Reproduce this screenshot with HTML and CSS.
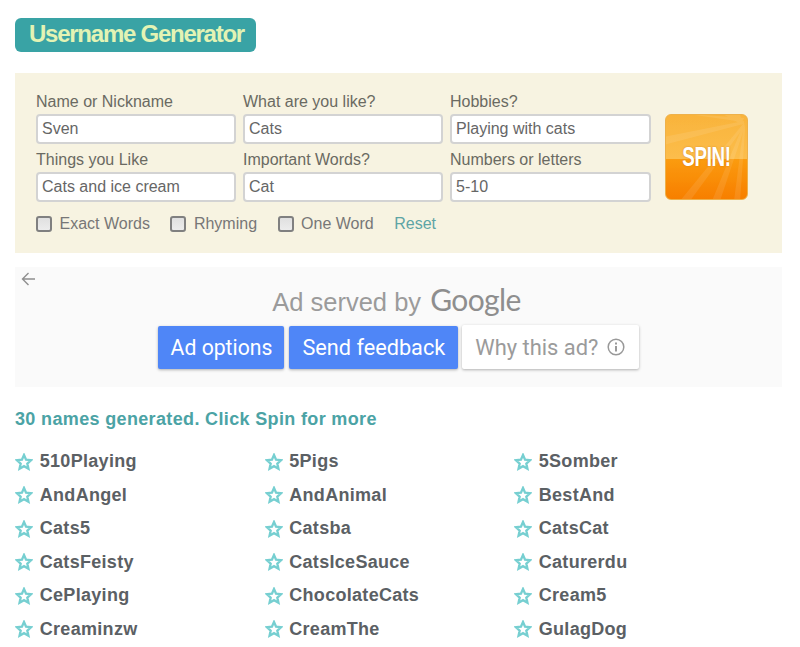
FILE: index.html
```html
<!DOCTYPE html>
<html lang="en">
<head>
<meta charset="utf-8">
<title>Username Generator</title>
<link rel="stylesheet" href="styles.css">
</head>
<body>
<h1 class="title">Username Generator</h1>
<form class="panel">
  <div class="fields">
    <div class="grid">
      <label class="field"><span>Name or Nickname</span><input value="Sven"></label>
      <label class="field"><span>What are you like?</span><input value="Cats"></label>
      <label class="field"><span>Hobbies?</span><input value="Playing with cats"></label>
      <label class="field"><span>Things you Like</span><input value="Cats and ice cream"></label>
      <label class="field"><span>Important Words?</span><input value="Cat"></label>
      <label class="field"><span>Numbers or letters</span><input value="5-10"></label>
    </div>
    <div class="options">
      <label class="check"><input type="checkbox"><span>Exact Words</span></label>
      <label class="check"><input type="checkbox"><span>Rhyming</span></label>
      <label class="check"><input type="checkbox"><span>One Word</span></label>
      <a class="reset">Reset</a>
    </div>
  </div>
  <button type="button" class="spin">
    <svg class="rays" viewBox="0 0 83 86" aria-hidden="true">
      <g fill="#fff" opacity=".09">
        <polygon points="76,0 60,0 78,10"/>
        <polygon points="80,3 38,0 30,0 78,7"/>
        <polygon points="80,6 0,22 0,30 80,9"/>
        <polygon points="80,8 48,86 56,86 80,14"/>
        <polygon points="80,8 70,86 76,86 81,14"/>
        <polygon points="80,8 16,86 26,86 80,12"/>
      </g>
    </svg>
    <span class="spin-text">SPIN!</span>
  </button>
</form>
<section class="ad">
  <svg class="back" viewBox="0 0 14 14" aria-hidden="true"><path d="M14 7H1.500M7.500 1L1.500 7l6 6" fill="none" stroke="#8f8f8f" stroke-width="1.4"/></svg>
  <div class="served">Ad served by <span class="google">Google</span></div>
  <div class="ad-buttons">
    <a class="ad-btn">Ad options</a>
    <a class="ad-btn">Send feedback</a>
    <a class="ad-btn why">Why this ad?
      <svg class="info" viewBox="0 0 18 18" aria-hidden="true"><circle cx="9" cy="9" r="7.800" fill="none" stroke="#999" stroke-width="1.500"/><rect x="8" y="8" width="2" height="5.500" fill="#999"/><rect x="8" y="4.500" width="2" height="2" fill="#999"/></svg>
    </a>
  </div>
</section>
<h2 class="count">30 names generated. Click Spin for more</h2>
<ul class="names">
  <li><svg class="star" viewBox="0 0 20 20"><path d="M10 2.2l2.3 5.2 5.6.6-4.2 3.8 1.2 5.6L10 14.6l-4.9 2.8 1.2-5.6L2.100 8l5.600-.6z"/></svg>510Playing</li>
  <li><svg class="star" viewBox="0 0 20 20"><path d="M10 2.2l2.3 5.2 5.6.6-4.2 3.8 1.2 5.6L10 14.6l-4.9 2.8 1.2-5.6L2.100 8l5.600-.6z"/></svg>5Pigs</li>
  <li><svg class="star" viewBox="0 0 20 20"><path d="M10 2.2l2.3 5.2 5.6.6-4.2 3.8 1.2 5.6L10 14.6l-4.9 2.8 1.2-5.6L2.100 8l5.600-.6z"/></svg>5Somber</li>
  <li><svg class="star" viewBox="0 0 20 20"><path d="M10 2.2l2.3 5.2 5.6.6-4.2 3.8 1.2 5.6L10 14.6l-4.9 2.8 1.2-5.6L2.100 8l5.600-.6z"/></svg>AndAngel</li>
  <li><svg class="star" viewBox="0 0 20 20"><path d="M10 2.2l2.3 5.2 5.6.6-4.2 3.8 1.2 5.6L10 14.6l-4.9 2.8 1.2-5.6L2.100 8l5.600-.6z"/></svg>AndAnimal</li>
  <li><svg class="star" viewBox="0 0 20 20"><path d="M10 2.2l2.3 5.2 5.6.6-4.2 3.8 1.2 5.6L10 14.6l-4.9 2.8 1.2-5.6L2.100 8l5.600-.6z"/></svg>BestAnd</li>
  <li><svg class="star" viewBox="0 0 20 20"><path d="M10 2.2l2.3 5.2 5.6.6-4.2 3.8 1.2 5.6L10 14.6l-4.9 2.8 1.2-5.6L2.100 8l5.600-.6z"/></svg>Cats5</li>
  <li><svg class="star" viewBox="0 0 20 20"><path d="M10 2.2l2.3 5.2 5.6.6-4.2 3.8 1.2 5.6L10 14.6l-4.9 2.8 1.2-5.6L2.100 8l5.600-.6z"/></svg>Catsba</li>
  <li><svg class="star" viewBox="0 0 20 20"><path d="M10 2.2l2.3 5.2 5.6.6-4.2 3.8 1.2 5.6L10 14.6l-4.9 2.8 1.2-5.6L2.100 8l5.600-.6z"/></svg>CatsCat</li>
  <li><svg class="star" viewBox="0 0 20 20"><path d="M10 2.2l2.3 5.2 5.6.6-4.2 3.8 1.2 5.6L10 14.6l-4.9 2.8 1.2-5.6L2.100 8l5.600-.6z"/></svg>CatsFeisty</li>
  <li><svg class="star" viewBox="0 0 20 20"><path d="M10 2.2l2.3 5.2 5.6.6-4.2 3.8 1.2 5.6L10 14.6l-4.9 2.8 1.2-5.6L2.100 8l5.600-.6z"/></svg>CatsIceSauce</li>
  <li><svg class="star" viewBox="0 0 20 20"><path d="M10 2.2l2.3 5.2 5.6.6-4.2 3.8 1.2 5.6L10 14.6l-4.9 2.8 1.2-5.6L2.100 8l5.600-.6z"/></svg>Caturerdu</li>
  <li><svg class="star" viewBox="0 0 20 20"><path d="M10 2.2l2.3 5.2 5.6.6-4.2 3.8 1.2 5.6L10 14.6l-4.9 2.8 1.2-5.6L2.100 8l5.600-.6z"/></svg>CePlaying</li>
  <li><svg class="star" viewBox="0 0 20 20"><path d="M10 2.2l2.3 5.2 5.6.6-4.2 3.8 1.2 5.6L10 14.6l-4.9 2.8 1.2-5.6L2.100 8l5.600-.6z"/></svg>ChocolateCats</li>
  <li><svg class="star" viewBox="0 0 20 20"><path d="M10 2.2l2.3 5.2 5.6.6-4.2 3.8 1.2 5.6L10 14.6l-4.9 2.8 1.2-5.6L2.100 8l5.600-.6z"/></svg>Cream5</li>
  <li><svg class="star" viewBox="0 0 20 20"><path d="M10 2.2l2.3 5.2 5.6.6-4.2 3.8 1.2 5.6L10 14.6l-4.9 2.8 1.2-5.6L2.100 8l5.600-.6z"/></svg>Creaminzw</li>
  <li><svg class="star" viewBox="0 0 20 20"><path d="M10 2.2l2.3 5.2 5.6.6-4.2 3.8 1.2 5.6L10 14.6l-4.9 2.8 1.2-5.6L2.100 8l5.600-.6z"/></svg>CreamThe</li>
  <li><svg class="star" viewBox="0 0 20 20"><path d="M10 2.2l2.3 5.2 5.6.6-4.2 3.8 1.2 5.6L10 14.6l-4.9 2.8 1.2-5.6L2.100 8l5.600-.6z"/></svg>GulagDog</li>
</ul>
</body>
</html>
```
FILE: styles.css
```css
* { box-sizing: border-box; }
html, body { margin: 0; height: 647px; overflow: hidden; }
body {
  padding: 18px 18px 0 15px;
  background: #fff;
  font-family: "Liberation Sans", Arial, sans-serif;
  color: #666;
}
.title {
  display: inline-block;
  margin: 0;
  width: 241px;
  height: 34px;
  padding: 0 0 0 14px;
  background: #39a3a5;
  border-radius: 6px;
  color: #e3f3b4;
  font-size: 24px;
  line-height: 31px;
  font-weight: bold;
  letter-spacing: -1.25px;
  vertical-align: top;
}
.panel {
  display: flex;
  margin-top: 21px;
  height: 180px;
  width: 767px;
  background: #f7f3e1;
  padding: 19px 0 0 21px;
}
.grid {
  display: grid;
  grid-template-columns: 200px 200px 200.5px;
  column-gap: 7px;
  row-gap: 0;
}
.field { display: flex; flex-direction: column; height: 58px; }
.field span { font-size: 16px; line-height: 20px; height: 22px; color: #6a6a62; }
.field input {
  width: 100%;
  height: 30px;
  padding: 0 4px;
  border: 2px solid #d3d3d3;
  border-radius: 4px;
  background: #fff;
  font: 16px "Liberation Sans", Arial, sans-serif;
  color: #666;
  outline: none;
}
.options { display: flex; align-items: center; margin-top: 4px; height: 24px; font-size: 16px; }
.check { display: flex; align-items: center; margin-right: 20.5px; color: #777; }
.check input {
  appearance: none;
  flex: none;
  width: 16px;
  height: 16px;
  margin: 0 7.5px 0 0;
  background: linear-gradient(180deg, #e0e0e0, #ececec);
  border: 2px solid #808080;
  border-radius: 3px;
}
.reset { color: #5ea5a5; }
.spin {
  position: relative;
  flex: none;
  margin: 22px 0 0 14.5px;
  width: 83px;
  height: 86px;
  padding: 0;
  overflow: hidden;
  border: 1px solid #eeb14a;
  border-radius: 6px;
  background: linear-gradient(180deg, #f9b43c 0%, #fcbd4c 52%, #fb9c10 52%, #f77f00 100%);
}
.rays { position: absolute; inset: 0; width: 100%; height: 100%; }
.spin-text {
  position: relative;
  display: block;
  color: #fff;
  font: bold 28px "Liberation Sans", sans-serif;
  letter-spacing: -.4px;
  transform: scaleX(.67);
  text-shadow: 0 0 2px rgba(170,80,0,.5);
}
.ad {
  position: relative;
  margin-top: 14px;
  width: 767px;
  height: 120px;
  background: #fafafa;
  display: flex;
  flex-direction: column;
  align-items: center;
}
.back { position: absolute; left: 6px; top: 5px; width: 14px; height: 14px; }
.served {
  margin: 13px 0 0 -4px;
  height: 45px;
  font-size: 25.5px;
  line-height: 38px;
  white-space: nowrap;
  color: #9b9b9b;
}
.google { margin-left: 2px; font-family: Lato, sans-serif; font-size: 30px; color: #8e8e8e; letter-spacing: -.6px; }
.ad-buttons { display: flex; align-items: flex-end; }
.ad-btn {
  display: flex;
  align-items: center;
  height: 43px;
  padding: 0 12px 0 13px;
  margin-right: 5px;
  background: #4f86f7;
  color: #fff;
  font-family: Roboto, sans-serif;
  font-size: 21.2px;
  border-radius: 2px;
  box-shadow: 0 1px 3px rgba(0,0,0,.3);
}
.ad-btn:nth-child(2) { margin-right: 4px; padding: 0 13px; font-size: 21.7px; }
.why { height: 44px; margin-right: 0; padding: 0 14px 0 13px; background: #fff; color: #9b9b9b; gap: 9px; font-size: 21.9px; }
.info { width: 18px; height: 18px; }
.count {
  margin: 21px 0 0;
  font-size: 18px;
  line-height: 22px;
  font-weight: bold;
  letter-spacing: .35px;
  color: #4ba3a5;
}
.names {
  display: grid;
  grid-template-columns: repeat(3, 249.5px);
  grid-auto-rows: 33.5px;
  margin: 15px 0 0;
  padding: 0 0 0 .25px;
  list-style: none;
}
.names li {
  display: flex;
  align-items: center;
  gap: 6.5px;
  font-size: 18px;
  font-weight: bold;
  letter-spacing: .3px;
  color: #5b6064;
}
.star { flex: none; width: 18px; height: 18px; fill: none; stroke: #76cfd1; stroke-width: 2.6; }
```
